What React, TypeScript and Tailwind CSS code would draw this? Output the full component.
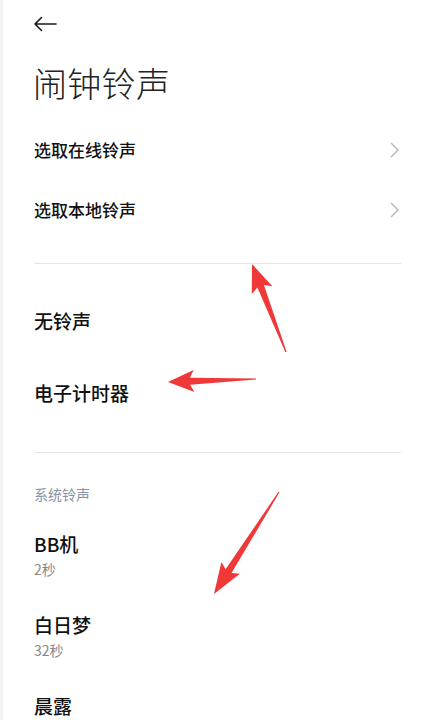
import React from 'react';

const cjk = { fontFamily: '"Noto Sans CJK SC", "Noto Sans", sans-serif' };

type Pt = [number, number];

// tapered annotation arrow: thin tail, wider shaft at the head
function arrowPoints(tail: Pt, tip: Pt, headLen: number, headHalf: number, shaftW: number, tailW = 1.2) {
  const dx = tip[0] - tail[0];
  const dy = tip[1] - tail[1];
  const len = Math.hypot(dx, dy);
  const ux = dx / len, uy = dy / len;
  const nx = -uy, ny = ux;
  const bx = tip[0] - ux * headLen, by = tip[1] - uy * headLen;
  const pts: Pt[] = [
    [tail[0] + nx * tailW / 2, tail[1] + ny * tailW / 2],
    [bx + nx * shaftW / 2, by + ny * shaftW / 2],
    [bx - ux * 4 + nx * headHalf, by - uy * 4 + ny * headHalf],
    tip,
    [bx - ux * 4 - nx * headHalf, by - uy * 4 - ny * headHalf],
    [bx - nx * shaftW / 2, by - ny * shaftW / 2],
    [tail[0] - nx * tailW / 2, tail[1] - ny * tailW / 2],
  ];
  return pts.map(p => `${p[0].toFixed(1)},${p[1].toFixed(1)}`).join(' ');
}

function Chevron() {
  return (
    <svg width="10" height="16" viewBox="0 0 10 16" fill="none">
      <path d="M1.5 1.5 L8 8 L1.5 14.5" stroke="#b3b3b3" strokeWidth="1.3" strokeLinejoin="round" strokeLinecap="round" />
    </svg>
  );
}

function LinkRow({ label }: { label: string }) {
  return (
    <div className="h-[60px] flex items-center justify-between">
      <span className="text-[17px] font-medium text-[#111]">{label}</span>
      <div className="pr-[1px]"><Chevron /></div>
    </div>
  );
}

function Divider() {
  return <div className="h-px bg-[#e5e5e5]" />;
}

const sounds = [
  { name: 'BB机', len: '2秒' },
  { name: '白日梦', len: '32秒' },
  { name: '晨露', len: '' },
];

export default function App() {
  return (
    <div className="relative w-[429px] h-[720px] overflow-hidden bg-white flex" style={cjk}>
      <div className="w-[3px] shrink-0 bg-[#f2f2f2]" />
      <div className="flex-1 pl-[31px] pr-[28px]">
        {/* Header */}
        <div className="h-12 flex items-center">
          <svg width="24" height="16" viewBox="0 0 24 16" fill="none" className="-ml-[1px]">
            <path d="M23 8 H2 M8.5 1.5 L2 8 L8.5 14.5" stroke="#1a1a1a" strokeWidth="1.6" strokeLinecap="round" strokeLinejoin="round" />
          </svg>
        </div>
        <div className="h-[68px] flex items-center">
          <h1 className="text-[34px] font-light text-[#222] tracking-[0.3px] -ml-[1px]">闹钟铃声</h1>
        </div>

        <div className="mt-1">
          <LinkRow label="选取在线铃声" />
          <LinkRow label="选取本地铃声" />
        </div>

        <div className="mt-[23px]"><Divider /></div>

        <div className="mt-[21px]">
          <div className="h-[72px] flex items-center text-[19px] font-medium text-[#111]">无铃声</div>
          <div className="h-[72px] flex items-center text-[19px] font-medium text-[#111]">电子计时器</div>
        </div>

        <div className="mt-[23px]"><Divider /></div>

        <div className="mt-[21px] h-10 flex items-center text-[14px] text-[#8a91a3]">系统铃声</div>

        {sounds.map(s => (
          <div key={s.name} className="pt-[17px] pb-4">
            <div className="h-[26px] flex items-center text-[19px] font-medium text-[#111]">{s.name}</div>
            {s.len && <div className="mt-[2px] h-5 flex items-center text-[14px] text-[#888]">{s.len}</div>}
          </div>
        ))}
      </div>

      {/* red annotation arrows over the screenshot */}
      <svg className="absolute inset-0 pointer-events-none" width="429" height="720">
        <polygon points={arrowPoints([286, 352], [252, 264], 24, 11, 7)} fill="#f03838" />
        <polygon points={arrowPoints([256, 379], [168, 382], 22, 11, 7)} fill="#f03838" />
        <polygon points={arrowPoints([279, 492], [214, 594], 27, 11, 7)} fill="#f03838" />
      </svg>
    </div>
  );
}
